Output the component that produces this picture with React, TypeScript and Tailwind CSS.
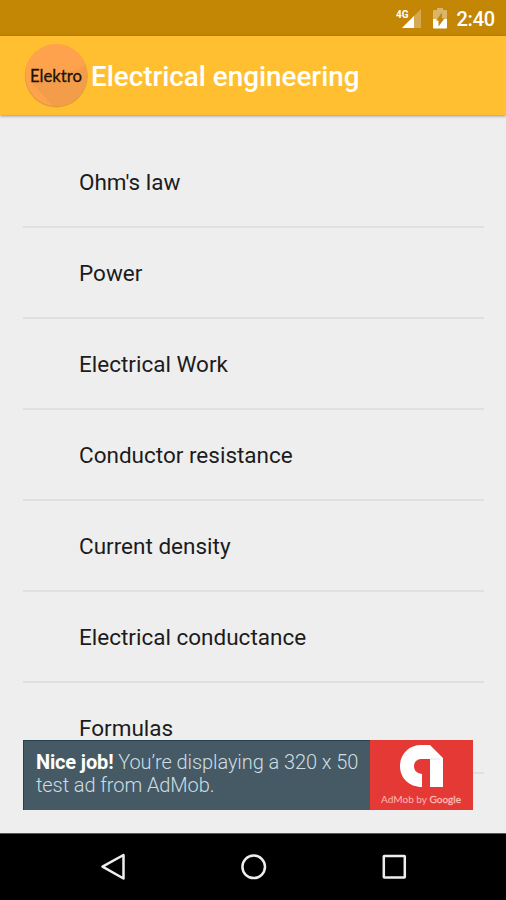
const TOPICS = [
  "Ohm's law",
  'Power',
  'Electrical Work',
  'Conductor resistance',
  'Current density',
  'Electrical conductance',
  'Formulas',
];

function StatusBar() {
  return (
    <div className="h-9 shrink-0 bg-[#c38605] flex items-center justify-end pr-[11px] text-white">
      {/* Mobile signal */}
      <svg width="26" height="30" viewBox="0 -4 26 30" className="mt-px">
        <path d="M25 1v19H6z" fill="#fff" fillOpacity="0.3" />
        <path d="M18 8v12H6z" fill="#fff" />
        <path d="M0 0h13v10.500H0z" fill="#c38605" />
        <text x="0" y="9.500" fontSize="11" fontWeight="700" fill="#fff" textLength="12.500" lengthAdjust="spacingAndGlyphs" fontFamily="Roboto, sans-serif">4G</text>
      </svg>
      {/* Battery */}
      <svg width="14" height="21" viewBox="0 0 14 21" className="ml-[11px] mt-px">
        <path d="M4 0h6v2h3q1 0 1 1v8H0V3q0-1 1-1h3z" fill="#fff" fillOpacity="0.4" />
        <path d="M0 11h14v8.5q0 1-1 1H1q-1 0-1-1z" fill="#fff" />
        <path d="M9 4.500v6h2.500l-6 8v-6H3z" fill="#c38605" />
      </svg>
      <span className="ml-[9px] mt-0.5 text-[20px] leading-none font-medium tracking-[-0.2px]">2:40</span>
    </div>
  );
}

function AppLogo() {
  return (
    <svg width="66" height="66" viewBox="0 0 66 66" className="shrink-0">
      <defs>
        <clipPath id="disc">
          <circle cx="33.300" cy="32" r="31" />
        </clipPath>
      </defs>
      <circle cx="33.300" cy="33" r="31.500" fill="#c58a38" fillOpacity="0.6" />
      <g clipPath="url(#disc)">
        <rect width="66" height="66" fill="#ffa24e" />
        <path d="M7 38L33 66h33V18L57 26z" fill="#f39c49" />
      </g>
      <text x="7" y="39" fontSize="18" fill="#1c1208" stroke="#1c1208" strokeWidth="0.3" textLength="52" lengthAdjust="spacingAndGlyphs" fontFamily="Lato, sans-serif">Elektro</text>
    </svg>
  );
}

function AdBanner() {
  return (
    <div className="absolute left-[23px] top-[625px] w-[450px] h-[70px] flex">
      <div className="w-[347px] bg-[#455a64] border-t border-l border-[#21424f] pl-3 pt-[9px] text-[20px] leading-[24px] tracking-[-0.08px] text-[#cfdde5] font-light whitespace-nowrap">
        <p><b className="font-bold text-white tracking-[-0.15px]">Nice job!</b> You’re displaying a 320 x 50</p>
        <p className="-mt-px">test ad from AdMob.</p>
      </div>
      <svg width="103" height="70" viewBox="0 0 103 70">
        <rect width="103" height="70" fill="#e53935" />
        <path d="M52 47C39 47 30 38 30 26C30 14 39 5 51 5H60L73 18V47H60V19H52C47 19 44 22 44 26C44 30 46 33 52 34V47Z" fill="#fff" />
        <path d="M60 19h10" stroke="#e4dfdf" strokeWidth="1" />
        <text x="11" y="62.500" fontSize="10" fill="#ffb9b5" textLength="80" lengthAdjust="spacingAndGlyphs" fontFamily="Lato, sans-serif">AdMob by <tspan stroke="#ffb9b5" strokeWidth="0.300">Google</tspan></text>
      </svg>
    </div>
  );
}

function NavBar() {
  return (
    <div className="h-[67px] shrink-0 bg-black border-t border-[#555]">
      <svg width="506" height="66" viewBox="0 834 506 66" fill="none" stroke="#eee" strokeWidth="2.500" strokeLinejoin="round">
        <path d="M102.500 866.700L123.500 855v23.500z" />
        <circle cx="253.700" cy="866.800" r="11.300" />
        <rect x="383.800" y="856" width="21" height="21.500" rx="0.500" />
      </svg>
    </div>
  );
}

export default function App() {
  return (
    <div className="w-[506px] h-[900px] flex flex-col overflow-hidden bg-[#eee] font-['Roboto',sans-serif]">
      <StatusBar />
      <header className="relative z-10 h-[79px] shrink-0 bg-[#ffbf30] flex items-center pl-[23px] shadow-[0_1px_3px_rgba(0,0,0,0.4)]">
        <AppLogo />
        <h1 className="ml-[2px] pt-0.5 text-[27.800px] font-medium text-white whitespace-nowrap">Electrical engineering</h1>
      </header>
      <main className="relative flex-1 min-h-0 px-[23px] pt-[22px]">
        <ul>
          {TOPICS.map((topic) => (
            <li
              key={topic}
              className="h-[91px] w-[461px] pl-14 pt-0.5 flex items-center border-b-2 border-[#e0e0e0] text-[22.500px] text-[#1c1c1c]"
            >
              {topic}
            </li>
          ))}
        </ul>
        <AdBanner />
      </main>
      <NavBar />
    </div>
  );
}
